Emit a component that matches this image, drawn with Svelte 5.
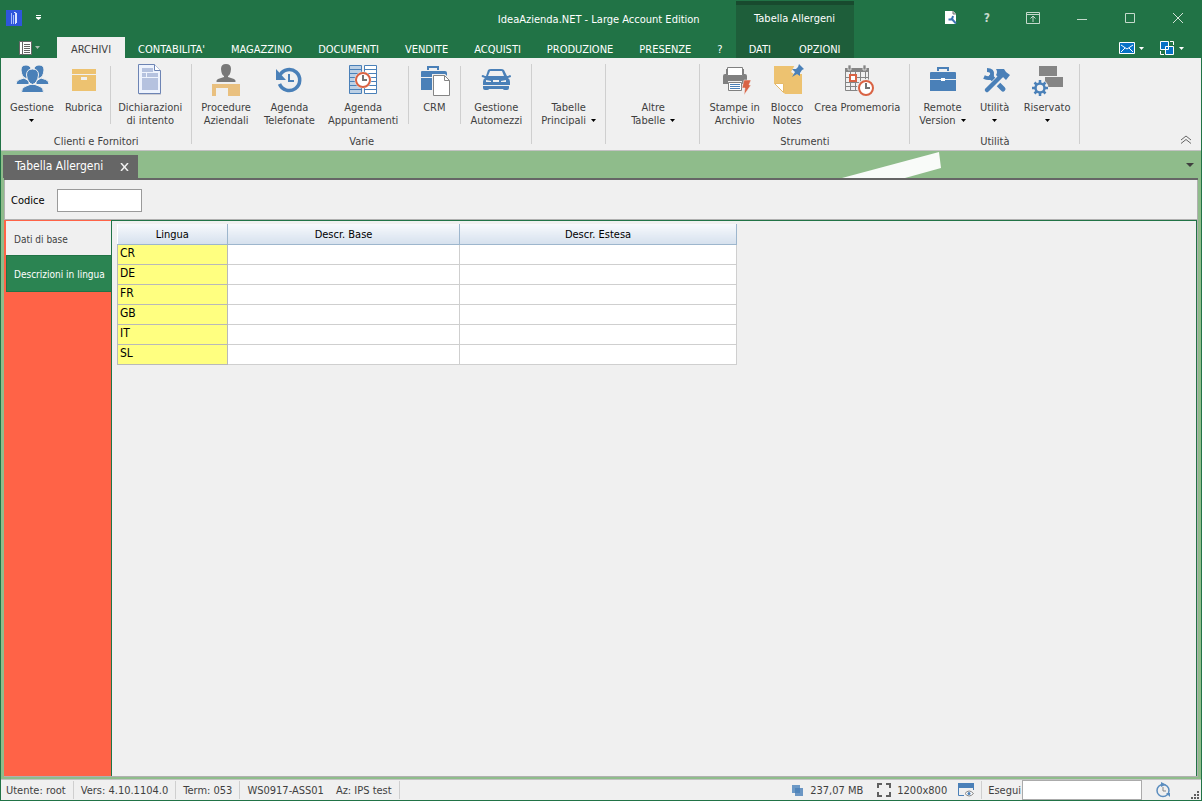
<script lang="ts">
  interface Command {
    icon?: string;
    lines: string[];
    menu?: boolean;
    divider?: boolean;
  }

  interface Group {
    caption: string;
    wide?: boolean;
    roomy?: boolean;
    items: Command[];
  }

  const tabs = ['ARCHIVI', "CONTABILITA'", 'MAGAZZINO', 'DOCUMENTI', 'VENDITE', 'ACQUISTI', 'PRODUZIONE', 'PRESENZE', '?'];
  const contextTabs = ['DATI', 'OPZIONI'];

  const groups: Group[] = [
    {
      caption: 'Clienti e Fornitori',
      items: [
        { icon: 'people', lines: ['Gestione'], menu: true },
        { icon: 'box', lines: ['Rubrica'] },
        { icon: 'document', lines: ['Dichiarazioni', 'di intento'], divider: true },
      ],
    },
    {
      caption: 'Varie',
      roomy: true,
      items: [
        { icon: 'desk', lines: ['Procedure', 'Aziendali'] },
        { icon: 'history', lines: ['Agenda', 'Telefonate'] },
        { icon: 'agenda', lines: ['Agenda', 'Appuntamenti'] },
        { icon: 'crm', lines: ['CRM'], divider: true },
        { icon: 'car', lines: ['Gestione', 'Automezzi'], divider: true },
      ],
    },
    { caption: '', items: [{ lines: ['Tabelle', 'Principali'], menu: true }] },
    { caption: '', wide: true, items: [{ lines: ['Altre', 'Tabelle'], menu: true }] },
    {
      caption: 'Strumenti',
      items: [
        { icon: 'printer', lines: ['Stampe in', 'Archivio'] },
        { icon: 'note', lines: ['Blocco', 'Notes'] },
        { icon: 'calendar', lines: ['Crea Promemoria'] },
      ],
    },
    {
      caption: 'Utilità',
      roomy: true,
      items: [
        { icon: 'briefcase', lines: ['Remote', 'Version'], menu: true },
        { icon: 'tools', lines: ['Utilità'], menu: true },
        { icon: 'blocks', lines: ['Riservato'], menu: true },
      ],
    },
  ];

  const pages = ['Dati di base', 'Descrizioni in lingua'];
  const languages = ['CR', 'DE', 'FR', 'GB', 'IT', 'SL'];

  let activeTab = $state('ARCHIVI');
  let activePage = $state('Descrizioni in lingua');
  let code = $state('');
  let command = $state('');
</script>

{#snippet arrow()}
  <svg class="arrow" width="5" height="3" viewBox="0 0 5 3"><path d="M0 0h5L2.5 3z" fill="currentColor" /></svg>
{/snippet}

{#snippet commandIcon(name: string | undefined)}
  <svg class="icon" width="32" height="32" viewBox="0 0 32 32">
    {#if name === 'people'}
      <g fill="#4a80b8" stroke="#f0f0f0">
        <path d="M0 20.500q0-4 3.500-5L8 14l5 3v3.500zM33 20.500q0-4-3.500-5L25 14l-5 3v3.500z" />
        <path d="M5 6q0-5 5-5 4.500 0 5 4.500Q14 14 10 14.500 5.500 13 5 6zM28 6q0-5-5-5-4.500 0-5 4.500.5 8.500 5 9 4.500-1.500 5-8.500z" />
        <path d="M5.500 28.500q0-5 3.500-6l5-2h5l5 2q3.500 1 3.500 6z" />
        <path d="M10.500 11q0-6 6-6t6 6q-1 8-6 9.500-5-1.500-6-9.500z" />
      </g>
    {:else if name === 'box'}
      <path d="M4 5h24v5H4z" fill="#edc270" />
      <path d="M4 11h24v16H4zM13 13v3h6v-3z" fill="#edc270" fill-rule="evenodd" />
    {:else if name === 'document'}
      <path d="M5 1h16l6 7v23H5z" fill="#a9a9b4" opacity=".5" />
      <path d="M4.500.5h16l6 6v23h-22z" fill="#eef3fd" stroke="#6d84b4" />
      <path d="M20.500.5v6h6" fill="#fff" stroke="#6d84b4" />
      <path d="M8 4h11v4H8zM8 9h4v4H8zM13 9h11v4H13zM8 14h16v12H8z" fill="#b5c2df" />
    {:else if name === 'desk'}
      <path d="M16 0q5 0 5 5-.5 6-3 7v1l6 2q2 1 1.500 3h-19q-.5-2 1.500-3l6-2v-1q-2.500-1-3-7 0-5 5-5z" fill="#787878" />
      <path d="M2 20h28v12H18v-8H6v8H2z" fill="#e9c07f" />
    {:else if name === 'history'}
      <path d="M7 11A10.500 10.500 0 1 1 6.500 20" fill="none" stroke="#4a80b8" stroke-width="3.500" />
      <path d="M3 5v11h10z" fill="#4a80b8" />
      <path d="M16 10v7h5" fill="none" stroke="#4a80b8" stroke-width="2" />
    {:else if name === 'agenda'}
      <path d="M2.500 1.500h12v28h-12z" fill="#bcd0e5" stroke="#4a80b8" />
      <path d="M17.500 1.500h12v28h-12z" fill="#fff" stroke="#4a80b8" />
      <path d="M3 5.500h11M3 9.500h11M3 13.500h11M3 17.500h11M3 21.500h11M3 25.500h11M18 5.500h11M18 9.500h11M18 13.500h11M18 17.500h11M18 21.500h11M18 25.500h11" stroke="#4a80b8" />
      <circle cx="16" cy="16" r="8.500" fill="#f0f0f0" />
      <circle cx="16" cy="16" r="7" fill="#fff" stroke="#d96344" stroke-width="2" />
      <path d="M16 11v5h4" fill="none" stroke="#737373" stroke-width="2" />
    {:else if name === 'crm'}
      <path d="M10 6V3h10v3" fill="none" stroke="#4a80b8" stroke-width="2" />
      <path d="M3 8q0-1 1-1h23q2 0 2 2v4H3zM3 14h26v12H3z" fill="#4a80b8" />
      <path d="M14 10h13l6 6v16H14z" fill="#f0f0f0" />
      <path d="M15.500 11.500h11l5 5v15h-16z" fill="#fff" stroke="#858585" />
      <path d="M26.500 11.500v5h5" fill="none" stroke="#858585" />
    {:else if name === 'car'}
      <path d="M8 6q1-1 3-1h10q2 0 3 1l3 6h1l2-1q1 0 1 2l-3 1q2 1 2 4v3H3v-3q0-3 2-4l-3-1q-1-2 1-2l2 1h1zM10 7l-2 5h16l-2-5zM6 16v2h5v-1zM26 16v2h-5v-1zM13 16v2h6v-2z" fill="#4a80b8" fill-rule="evenodd" />
      <path d="M3 22h26v2q0 2-2 2h-2q-2 0-2-1H9q0 1-2 1H5q-2 0-2-2z" fill="#4a80b8" />
    {:else if name === 'printer'}
      <path d="M4 12q0-2 2-2h1V5h3v7h12V5h3v5h1q2 0 2 2v8h-5v-3H9v3H4z" fill="#808080" />
      <path d="M8.500 3.500h15v8h-15z" fill="#fff" stroke="#808080" />
      <path d="M9.500 18.500h13v8h-13z" fill="#fff" stroke="#808080" />
      <path d="M11 20.500h10M11 22.500h10M11 24.500h10" stroke="#4a80b8" />
      <path d="M25 16h7l-2 5h2l-7 10 1-7h-3z" fill="#d96344" stroke="#f0f0f0" stroke-width=".5" />
    {:else if name === 'note'}
      <path d="M3 2h28v28H14L3 19z" fill="#edc270" />
      <path d="M3.500 19.500h9v9z" fill="#fff" stroke="#e5b968" />
      <path d="M25-1h7v11h-9l-3-2z" fill="#f0f0f0" />
      <path d="M28 0l5 5-2 1-2 3v3l-3-2-5 3 3-5-3-3h4l2-2z" fill="#4a80b8" />
    {:else if name === 'calendar'}
      <path d="M4 4h24v4H4z" fill="#858585" />
      <path d="M7 1h3v5H7zM22 1h3v5h-3z" fill="#858585" stroke="#f0f0f0" stroke-width=".7" />
      <path d="M4.500 8v18.500h15M4.500 13.500h23M4.500 18.500h20M4.500 22.500h14M9.500 8v18M14.500 8v18M19.500 8v18M24.500 8v8M27.500 8v8" fill="none" stroke="#858585" />
      <path d="M9 11h6v6H9z" fill="#fff" stroke="#d96344" stroke-width="2" />
      <circle cx="25" cy="24" r="9" fill="#f0f0f0" />
      <circle cx="25" cy="24" r="7" fill="#fff" stroke="#d96344" stroke-width="2" />
      <path d="M25 19v5h4" fill="none" stroke="#737373" stroke-width="2" />
    {:else if name === 'briefcase'}
      <path d="M11 7V4h10v3" fill="none" stroke="#4a80b8" stroke-width="2" />
      <path d="M3 9q0-1 1-1h24q1 0 1 1v18H3z" fill="#4a80b8" />
      <path d="M3 15.500h26" stroke="#f0f0f0" />
      <path d="M14 14h4v3h-4z" fill="#fff" />
    {:else if name === 'tools'}
      <path d="M12 13l12 12" stroke="#4a80b8" stroke-width="5" stroke-linecap="round" />
      <path d="M8 6Q14 6 13 11 12 16 5 13" fill="none" stroke="#4a80b8" stroke-width="4" />
      <path d="M12 23l10-10" stroke="#f0f0f0" stroke-width="7" />
      <path d="M8 26l14-14" stroke="#4a80b8" stroke-width="4.500" stroke-linecap="round" />
      <path d="M17 5h8l2 3 4 3-4 5-3-3-4 1-3-3q2-3 0-6z" fill="#4a80b8" />
    {:else if name === 'blocks'}
      <path d="M8 2h18v10H8zM14 13h18v10H14z" fill="#858585" />
      <circle cx="9" cy="24" r="8.500" fill="#f0f0f0" />
      <circle cx="9" cy="24" r="4.500" fill="none" stroke="#4a80b8" stroke-width="2.500" />
      <path d="M9 16v3M9 29v3M1 24h3M14 24h3M3.500 18.500l2 2M12.500 27.500l2 2M14.500 18.500l-2 2M5.500 27.500l-2 2" stroke="#4a80b8" stroke-width="2.500" />
    {/if}
  </svg>
{/snippet}

<div class="window">
  <header>
    <div class="main-bar">
      <div class="title-row">
        <svg width="16" height="16" viewBox="0 0 16 16">
          <path d="M0 0h16v16H0z" fill="#2f55dc" />
          <path d="M5.500 3v11M7.500 5v9" stroke="#a9bbfa" />
          <path d="M8 2.500h1.500V14M10.500 3v10" fill="none" stroke="#dbe3ff" />
        </svg>
        <button class="plain" aria-label="Personalizza barra">
          <svg width="5" height="6" viewBox="0 0 5 6"><path d="M0 0h5v1H0zM0 2h5v1L2.500 5 0 3z" fill="#fff" /></svg>
        </button>
        <h1>IdeaAzienda.NET - Large Account Edition</h1>
      </div>
      <nav>
        <button class="plain file-menu" aria-label="Menu">
          <svg width="13" height="14" viewBox="0 0 13 14">
            <path d="M.5.5h12v13H.5z" fill="#fff" stroke="#666" />
            <path d="M3.500 0v14M5 3.500h6M5 5.500h6M5 7.500h6M5 9.500h6M5 11.500h6" stroke="#666" />
          </svg>
          {@render arrow()}
        </button>
        {#each tabs as tab}
          <button class="tab" class:active={activeTab === tab} onclick={() => (activeTab = tab)}>{tab}</button>
        {/each}
      </nav>
    </div>

    <div class="context">
      <span>Tabella Allergeni</span>
      <nav>
        {#each contextTabs as tab}
          <button class="tab" class:active={activeTab === tab} onclick={() => (activeTab = tab)}>{tab}</button>
        {/each}
      </nav>
    </div>

    <div class="system">
      <div class="system-row">
        <button class="plain" aria-label="Impostazioni">
          <svg width="14" height="14" viewBox="0 0 14 14">
            <path d="M1 0h8l3 3v10H1z" fill="#fff" />
            <path d="M9 0v3h3" fill="#ccc" stroke="#777" />
            <path d="M7 7l5 5.500M4.500 8.500H8L9 5" fill="none" stroke="#3d73b0" stroke-width="2" />
          </svg>
        </button>
        <button class="plain help" aria-label="Guida">?</button>
        <button class="plain" aria-label="Riduci barra multifunzione">
          <svg width="14" height="12" viewBox="0 0 14 12"><path d="M.5.5h13v11H.5zM1 2.500h12M7 10V4M4.500 6.500L7 4l2.500 2.500" fill="none" stroke="#c5d9cc" /></svg>
        </button>
        <button class="plain" aria-label="Riduci a icona">
          <svg width="12" height="12" viewBox="0 0 12 12"><path d="M1 7.500h10" stroke="#c5d9cc" /></svg>
        </button>
        <button class="plain" aria-label="Ingrandisci">
          <svg width="12" height="12" viewBox="0 0 12 12"><path d="M1.500 1.500h9v9h-9z" fill="none" stroke="#c5d9cc" /></svg>
        </button>
        <button class="plain" aria-label="Chiudi">
          <svg width="12" height="12" viewBox="0 0 12 12"><path d="M1 1l10 10M11 1L1 11" stroke="#d5e3d9" /></svg>
        </button>
      </div>
      <div class="tool-row">
        <button class="plain" aria-label="Messaggi">
          <svg width="16" height="12" viewBox="0 0 16 12">
            <path d="M.5.5h15v11H.5z" fill="#0872c6" stroke="#fff" />
            <path d="M2 3l6 4 6-4M2 10l4-4M14 10l-4-4" fill="none" stroke="#fff" />
          </svg>
          {@render arrow()}
        </button>
        <button class="plain" aria-label="Finestre">
          <svg width="15" height="14" viewBox="0 0 15 14">
            <path d="M.5.5h8v8h-8zM5.500 5.500h8v8h-8z" fill="#0872c6" stroke="#fff" />
            <path d="M10 .5h3.500V4M.5 10v3.500H4" fill="none" stroke="#fff" />
          </svg>
          {@render arrow()}
        </button>
      </div>
    </div>
  </header>

  <section class="ribbon">
    {#each groups as group}
      <div class="group" class:wide={group.wide} class:roomy={group.roomy}>
        <div class="commands">
          {#each group.items as item}
            {#if item.divider}<span class="divider"></span>{/if}
            <button class="command">
              {@render commandIcon(item.icon)}
              {#each item.lines as line, i}
                <span class="line">
                  {line}
                  {#if item.menu && i > 0}{@render arrow()}{/if}
                </span>
              {/each}
              {#if item.menu && item.lines.length === 1}
                <span class="line">{@render arrow()}</span>
              {/if}
            </button>
          {/each}
        </div>
        <span class="caption">{group.caption}</span>
      </div>
    {/each}
    <button class="plain collapse" aria-label="Comprimi barra">
      <svg width="12" height="9" viewBox="0 0 12 9"><path d="M1 5l5-4 5 4M1 8.500l5-4 5 4" fill="none" stroke="#666" /></svg>
    </button>
  </section>

  <main>
    <div class="doc-tabs">
      <svg class="swoosh" width="100" height="27" viewBox="0 0 100 27"><path d="M0 27L97 1l2 16-36 10z" fill="#f9fbf9" /></svg>
      <div class="doc-tab">
        Tabella Allergeni
        <button class="plain" aria-label="Chiudi scheda">
          <svg width="9" height="8" viewBox="0 0 9 8"><path d="M1 0l7 8M8 0L1 8" stroke="#f0f0f0" stroke-width="1.500" /></svg>
        </button>
      </div>
      <button class="plain doc-list" aria-label="Elenco schede">
        <svg width="8" height="4" viewBox="0 0 8 4"><path d="M0 0h8L4 4z" fill="#3f3f3f" /></svg>
      </button>
    </div>

    <div class="document">
      <div class="key">
        <label for="code">Codice</label>
        <input id="code" type="text" bind:value={code} />
      </div>
      <div class="body">
        <div class="pages">
          {#each pages as page}
            <button class="page" class:selected={activePage === page} onclick={() => (activePage = page)}>{page}</button>
          {/each}
        </div>
        <div class="content">
          <table>
            <thead>
              <tr>
                <th class="lang">Lingua</th>
                <th class="base">Descr. Base</th>
                <th>Descr. Estesa</th>
              </tr>
            </thead>
            <tbody>
              {#each languages as language}
                <tr>
                  <td class="key-cell">{language}</td>
                  <td></td>
                  <td></td>
                </tr>
              {/each}
            </tbody>
          </table>
        </div>
      </div>
    </div>
  </main>

  <footer>
    <span class="cell">Utente: root</span>
    <span class="cell">Vers: 4.10.1104.0</span>
    <span class="cell">Term: 053</span>
    <span class="cell">WS0917-ASS01 <span class="company">Az: IPS test</span></span>
    <div class="info">
      <svg width="12" height="12" viewBox="0 0 12 12"><path d="M0 1h8v8H0z" fill="#6c99c6" /><path d="M3 4h8v8H3z" fill="#4a80b8" opacity=".8" /></svg>
      <span>237,07 MB</span>
    </div>
    <div class="info">
      <svg width="14" height="14" viewBox="0 0 14 14"><path d="M1 5V1h4M9 1h4v4M13 9v4H9M5 13H1V9" fill="none" stroke="#606060" stroke-width="2" /></svg>
      <span>1200x800</span>
    </div>
    <div class="cell info">
      <svg width="16" height="14" viewBox="0 0 16 14">
        <path d="M.5.5h15v12H.5z" fill="#f0f0f0" stroke="#4a80b8" />
        <path d="M0 0h16v5H0z" fill="#4a80b8" />
        <path d="M6 7h10v7H6z" fill="#f0f0f0" />
        <path d="M7 10.500q4-5 8.500 0-4.500 5-8.500 0z" fill="#fff" stroke="#858585" />
        <circle cx="11" cy="10.500" r="1.500" fill="#4a80b8" />
      </svg>
    </div>
    <div class="run">
      <label for="command">Esegui</label>
      <input id="command" type="text" bind:value={command} />
    </div>
    <svg width="14" height="16" viewBox="0 0 14 16">
      <circle cx="7" cy="8.500" r="6" fill="none" stroke="#5b8dbf" stroke-width="1.500" />
      <path d="M5 0l5 2.500L5 5zM10 11h4v4z" fill="#5b8dbf" />
      <path d="M7 5v4h3" fill="none" stroke="#858585" />
    </svg>
    <svg class="grip" width="8" height="8" viewBox="0 0 8 8"><path d="M6 0h2v2H6zM3 3h2v2H3zM6 3h2v2H6zM0 6h2v2H0zM3 6h2v2H3zM6 6h2v2H6z" fill="#606060" /></svg>
  </footer>
</div>

<style>
  :global(body) {
    margin: 0;
    background: #f0f0f0;
  }

  .window {
    box-sizing: border-box;
    display: flex;
    flex-direction: column;
    min-height: 100vh;
    border: 1px solid #217346;
    border-top: 0;
    background: #f0f0f0;
    color: #3f3f3f;
    font-family: Tahoma, 'DejaVu Sans Condensed', sans-serif;
    font-size: 11px;
    line-height: 13px;
    white-space: nowrap;
  }

  button,
  input {
    font: inherit;
    color: inherit;
  }

  svg {
    display: block;
    flex: none;
  }

  .plain {
    display: flex;
    align-items: center;
    padding: 0;
    border: 0;
    background: none;
  }

  header {
    display: flex;
    height: 58px;
    background: #217346;
    color: #fff;
  }

  .main-bar {
    display: flex;
    flex-direction: column;
    justify-content: space-between;
  }

  .title-row {
    display: flex;
    align-items: center;
    gap: 14px;
    height: 35px;
    padding: 0 36px 0 5px;
  }

  h1 {
    margin: 3px 0 0 auto;
    font-size: 11px;
    font-weight: 400;
  }

  nav {
    display: flex;
  }

  .file-menu {
    width: 56px;
    padding-left: 18px;
    gap: 3px;
    color: #a9bdb0;
  }

  .tab {
    height: 21px;
    padding: 3px 13px 0;
    border: 0;
    background: none;
  }

  .tab.active {
    padding: 3px 14px 0;
    background: #f0f0f0;
    color: #3f3f3f;
  }

  .context {
    display: flex;
    flex-direction: column;
    justify-content: space-between;
    box-sizing: border-box;
    margin-top: 1px;
    border-top: 4px solid #184a2e;
    background: #1e5e3a;
    text-align: center;
  }

  .context span {
    padding-top: 7px;
  }

  .context nav {
    gap: 2px;
  }

  .system {
    display: flex;
    flex: 1;
    flex-direction: column;
    justify-content: space-between;
    align-items: flex-end;
  }

  .system-row {
    display: flex;
    align-items: center;
    height: 36px;
    padding-right: 17px;
    gap: 36px;
  }

  .system-row .plain:first-child {
    margin-right: -10px;
  }

  .help {
    font-size: 12px;
    font-weight: 700;
    color: #c5d9cc;
  }

  .tool-row {
    display: flex;
    padding-right: 17px;
    gap: 16px;
    height: 20px;
  }

  .tool-row .plain {
    gap: 4px;
  }

  .ribbon {
    display: flex;
    height: 92px;
    border-bottom: 1px solid #c2c2c2;
  }

  .group {
    display: flex;
    flex-direction: column;
    justify-content: space-between;
    position: relative;
    padding: 6px 5px 2px 4px;
  }

  .group::after {
    content: '';
    position: absolute;
    inset: 6px 0 6px auto;
    width: 1px;
    background: #cfcfcf;
  }

  .group.wide {
    padding-left: 20px;
    padding-right: 20px;
  }

  .commands {
    display: flex;
    gap: 1px;
  }

  .roomy .commands {
    gap: 3px;
  }

  .command {
    display: flex;
    flex-direction: column;
    align-items: center;
    justify-content: flex-start;
    padding: 0 5px;
    border: 0;
    background: none;
  }

  .icon {
    margin-bottom: 5px;
    overflow: visible;
  }

  .line {
    display: flex;
    align-items: center;
    justify-content: center;
    gap: 5px;
    min-height: 13px;
  }

  .line .arrow {
    color: #000;
  }

  .divider {
    width: 1px;
    margin: 2px 1px 0 2px;
    height: 58px;
    background: #cfcfcf;
  }

  .caption {
    text-align: center;
  }

  .collapse {
    margin: auto 9px 6px auto;
  }

  main {
    display: flex;
    flex: 1;
    flex-direction: column;
    padding: 0 3px 2px;
    background: #8fbc8b;
  }

  .doc-tabs {
    display: flex;
    position: relative;
    align-items: flex-end;
    justify-content: space-between;
    height: 27px;
    border-bottom: 2px solid #666;
  }

  .swoosh {
    position: absolute;
    right: 256px;
    top: 0;
  }

  .doc-tab {
    display: flex;
    align-items: center;
    height: 23px;
    padding: 0 9px 0 12px;
    margin-left: -1px;
    gap: 17px;
    background: #666;
    color: #fff;
    font-size: 12px;
  }

  .doc-list {
    margin: auto 4px auto 0;
  }

  .document {
    display: flex;
    flex: 1;
    flex-direction: column;
    background: #f0f0f0;
    border: 1px solid #b0b0b0;
    border-width: 0 1px 1px 0;
  }

  .key {
    display: flex;
    align-items: center;
    gap: 12px;
    height: 38px;
    padding: 1px 0 0 6px;
    border-bottom: 1px solid #b0b0b0;
    border-left: 1px solid #b0b0b0;
    color: #000;
  }

  .key input {
    box-sizing: border-box;
    width: 85px;
    height: 23px;
    border: 1px solid #9a9a9a;
    background: #fff;
  }

  .body {
    display: flex;
    flex: 1;
  }

  .pages {
    box-sizing: border-box;
    display: flex;
    flex-direction: column;
    width: 107px;
    padding: 1px 0 0 2px;
    background: #ff6347;
  }

  .page {
    height: 34px;
    padding: 2px 0 0 8px;
    border: 0;
    background: #f0f0f0;
    font-size: 10px;
    text-align: left;
  }

  .page.selected {
    height: 37px;
    border: 1px solid #217346;
    border-right: 0;
    background: #2b8452;
    color: #fff;
    padding-left: 7px;
  }

  .content {
    flex: 1;
    padding: 3px 5px;
    border: 1px solid #217346;
    border-bottom: 0;
  }

  table {
    border-collapse: collapse;
    table-layout: fixed;
    width: 620px;
    background: #fff;
    color: #000;
  }

  th {
    box-sizing: border-box;
    height: 20px;
    padding: 2px 0 0;
    border: 1px solid #9db6cd;
    border-top: 0;
    border-left: 0;
    background: linear-gradient(#f7f9fc, #d6e1ee);
    font-weight: 400;
  }

  .lang {
    width: 110px;
  }

  .base {
    width: 232px;
  }

  td {
    box-sizing: border-box;
    height: 20px;
    padding: 2px 2px 0;
    border: 1px solid #cfcfcf;
    vertical-align: top;
  }

  .key-cell {
    background: #ffff80;
    border: 1px solid #b9b9b9;
    font-size: 12px;
  }

  footer {
    display: flex;
    align-items: center;
    height: 20px;
    border-top: 1px solid #c2c2c2;
  }

  .cell {
    display: flex;
    align-items: center;
    height: 18px;
    padding: 0 7px;
    border-right: 1px solid #cfcfcf;
  }

  .cell:first-child {
    padding-left: 5px;
  }

  .company {
    margin-left: 12px;
  }

  .info {
    display: flex;
    align-items: center;
    gap: 6px;
    margin-right: 14px;
  }

  .cell + .info {
    margin-left: auto;
  }

  .cell.info {
    margin-right: 0;
    margin-left: -3px;
    padding: 0 7px 0 0;
  }

  .run {
    display: flex;
    align-items: center;
    gap: 1px;
    padding-left: 6px;
    margin-right: 14px;
  }

  .run input {
    box-sizing: border-box;
    width: 120px;
    height: 20px;
    border: 1px solid #ababab;
    background: #fff;
  }

  .grip {
    margin: auto 2px 1px 21px;
  }
</style>
